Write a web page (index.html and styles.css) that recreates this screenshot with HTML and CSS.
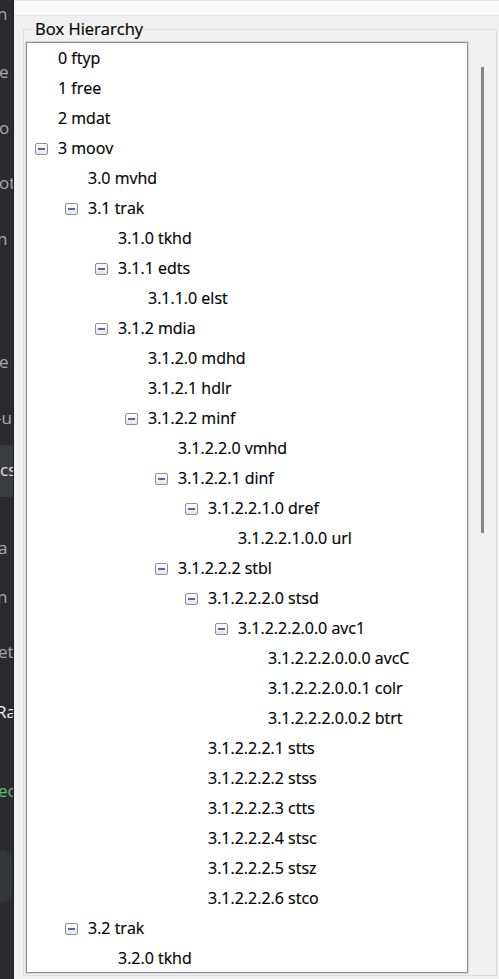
FILE: index.html
```html
<!DOCTYPE html>
<html>
<head>
<meta charset="utf-8">
<link rel="stylesheet" href="styles.css">
</head>
<body>
<div class="app">
  <aside class="sidebar">
    <div class="sb-item sb-a">n</div>
    <div class="sb-item sb-b">e</div>
    <div class="sb-item sb-c">o</div>
    <div class="sb-item sb-d">ot</div>
    <div class="sb-item sb-e">n</div>
    <div class="sb-item sb-f">e</div>
    <div class="sb-item sb-g">-u</div>
    <div class="sb-item sb-sel">cs</div>
    <div class="sb-item sb-h">a</div>
    <div class="sb-item sb-i">n</div>
    <div class="sb-item sb-j">et</div>
    <div class="sb-item sb-k">Ra</div>
    <div class="sb-item sb-l">ec</div>
    <div class="sb-pill"></div>
  </aside>
  <main class="main">
    <div class="topbar"></div>
    <fieldset class="group">
      <legend class="group-title">Box Hierarchy</legend>
      <div class="group-body">
        <div class="tree">
          <div class="row l0"><span class="twisty"></span><span class="label">0 ftyp</span></div>
          <div class="row l0"><span class="twisty"></span><span class="label">1 free</span></div>
          <div class="row l0"><span class="twisty"></span><span class="label">2 mdat</span></div>
          <div class="row l0"><span class="twisty"><span class="box"></span></span><span class="label">3 moov</span></div>
          <div class="row l1"><span class="twisty"></span><span class="label">3.0 mvhd</span></div>
          <div class="row l1"><span class="twisty"><span class="box"></span></span><span class="label">3.1 trak</span></div>
          <div class="row l2"><span class="twisty"></span><span class="label">3.1.0 tkhd</span></div>
          <div class="row l2"><span class="twisty"><span class="box"></span></span><span class="label">3.1.1 edts</span></div>
          <div class="row l3"><span class="twisty"></span><span class="label">3.1.1.0 elst</span></div>
          <div class="row l2"><span class="twisty"><span class="box"></span></span><span class="label">3.1.2 mdia</span></div>
          <div class="row l3"><span class="twisty"></span><span class="label">3.1.2.0 mdhd</span></div>
          <div class="row l3"><span class="twisty"></span><span class="label">3.1.2.1 hdlr</span></div>
          <div class="row l3"><span class="twisty"><span class="box"></span></span><span class="label">3.1.2.2 minf</span></div>
          <div class="row l4"><span class="twisty"></span><span class="label">3.1.2.2.0 vmhd</span></div>
          <div class="row l4"><span class="twisty"><span class="box"></span></span><span class="label">3.1.2.2.1 dinf</span></div>
          <div class="row l5"><span class="twisty"><span class="box"></span></span><span class="label">3.1.2.2.1.0 dref</span></div>
          <div class="row l6"><span class="twisty"></span><span class="label">3.1.2.2.1.0.0 url</span></div>
          <div class="row l4"><span class="twisty"><span class="box"></span></span><span class="label">3.1.2.2.2 stbl</span></div>
          <div class="row l5"><span class="twisty"><span class="box"></span></span><span class="label">3.1.2.2.2.0 stsd</span></div>
          <div class="row l6"><span class="twisty"><span class="box"></span></span><span class="label">3.1.2.2.2.0.0 avc1</span></div>
          <div class="row l7"><span class="twisty"></span><span class="label">3.1.2.2.2.0.0.0 avcC</span></div>
          <div class="row l7"><span class="twisty"></span><span class="label">3.1.2.2.2.0.0.1 colr</span></div>
          <div class="row l7"><span class="twisty"></span><span class="label">3.1.2.2.2.0.0.2 btrt</span></div>
          <div class="row l5"><span class="twisty"></span><span class="label">3.1.2.2.2.1 stts</span></div>
          <div class="row l5"><span class="twisty"></span><span class="label">3.1.2.2.2.2 stss</span></div>
          <div class="row l5"><span class="twisty"></span><span class="label">3.1.2.2.2.3 ctts</span></div>
          <div class="row l5"><span class="twisty"></span><span class="label">3.1.2.2.2.4 stsc</span></div>
          <div class="row l5"><span class="twisty"></span><span class="label">3.1.2.2.2.5 stsz</span></div>
          <div class="row l5"><span class="twisty"></span><span class="label">3.1.2.2.2.6 stco</span></div>
          <div class="row l1"><span class="twisty"><span class="box"></span></span><span class="label">3.2 trak</span></div>
          <div class="row l2"><span class="twisty"></span><span class="label">3.2.0 tkhd</span></div>
        </div>
        <div class="scrollbar"><div class="thumb"></div></div>
      </div>
    </fieldset>
  </main>
</div>
</body>
</html>
```
FILE: styles.css
```css
* { box-sizing: border-box; }
html, body { margin: 0; padding: 0; }
body {
  width: 499px;
  height: 979px;
  overflow: hidden;
  background: #f0f0f0;
  font-family: "Open Sans", "Noto Sans", "Liberation Sans", sans-serif;
  color: #000;
}
.app { display: flex; height: 979px; }

/* dark sidebar (clipped) */
.sidebar {
  width: 14px;
  flex: none;
  background: #2b2b2f;
  border-right: 1px solid #1f1f22;
  overflow: hidden;
  display: flex;
  flex-direction: column;
  font-size: 17px;
  color: #a9a9ad;
}
.sb-item {
  height: 28px;
  line-height: 28px;
  white-space: nowrap;
  flex: none;
}
.sb-a { margin-top: 0; margin-left: -3px; }
.sb-b { margin-top: 30px; margin-left: -1px; }
.sb-c { margin-top: 28px; margin-left: -1px; }
.sb-d { margin-top: 27px; margin-left: -1px; }
.sb-e { margin-top: 28px; margin-left: -3px; }
.sb-f { margin-top: 95px; margin-left: -1px; }
.sb-g { margin-top: 28px; margin-left: -4px; }
.sb-sel {
  margin-top: 13px;
  height: 52px;
  line-height: 50px;
  background: #3a3b40;
  color: #e4e4e6;
}
.sb-h { margin-top: 37px; margin-left: -2px; }
.sb-i { margin-top: 21px; margin-left: -3px; }
.sb-j { margin-top: 27px; margin-left: -2px; }
.sb-k { margin-top: 32px; margin-left: -4px; color: #f2f2f2; }
.sb-l { margin-top: 51px; margin-left: -2px; color: #5fbf6a; }
.sb-pill {
  margin-top: 45px;
  height: 53px;
  width: 12px;
  flex: none;
  background: #35363a;
  border-radius: 0 10px 10px 0;
}

/* main area */
.main {
  flex: 1;
  display: flex;
  flex-direction: column;
  padding-left: 9px;
}
.topbar {
  height: 16px;
  margin-left: -9px;
  background: #f9f9f9;
  border-top: 1px solid #e4e4e4;
  border-bottom: 1px solid #e7e7e7;
  flex: none;
}
.group {
  margin: 3px 0 0 0;
  padding: 0 0 2px 2px;
  width: 474px;
  border: 1px solid #dcdcdc;
  min-width: 0;
}
.group-title {
  margin-left: 7px;
  padding: 0 2px;
  font-size: 16.5px;
  line-height: 20px;
  height: 20px;
  color: #000;
  -webkit-text-stroke: 0.2px #000;
}
.group-body {
  display: flex;
  margin-top: 3px;
}
.tree {
  width: 442px;
  height: 931px;
  flex: none;
  background: #fff;
  border: 1px solid #8c9098;
  box-shadow: 0 0 0 1px #d3d5da;
  overflow: hidden;
  font-size: 16px;
}
.row {
  height: 30px;
  display: flex;
  align-items: center;
  white-space: nowrap;
}
.l0 { padding-left: 8px; }
.l1 { padding-left: 38px; }
.l2 { padding-left: 68px; }
.l3 { padding-left: 98px; }
.l4 { padding-left: 128px; }
.l5 { padding-left: 158px; }
.l6 { padding-left: 188px; }
.l7 { padding-left: 218px; }
.twisty {
  width: 23px;
  flex: none;
  display: flex;
  align-items: center;
  padding-top: 1px;
}
.box {
  width: 13px;
  height: 12px;
  border: 1px solid #8f8f8f;
  border-radius: 2px;
  background: linear-gradient(#ffffff, #e6e6e6);
  display: flex;
  align-items: center;
  justify-content: center;
}
.box::before {
  content: "";
  width: 7px;
  height: 2px;
  background: #4d6aa8;
}
.label {
  line-height: 20px;
  -webkit-text-stroke: 0.2px #000;
}

.scrollbar {
  flex: 1;
  padding-left: 13px;
  padding-top: 25px;
}
.thumb {
  width: 3px;
  height: 466px;
  background: #868686;
}
```
